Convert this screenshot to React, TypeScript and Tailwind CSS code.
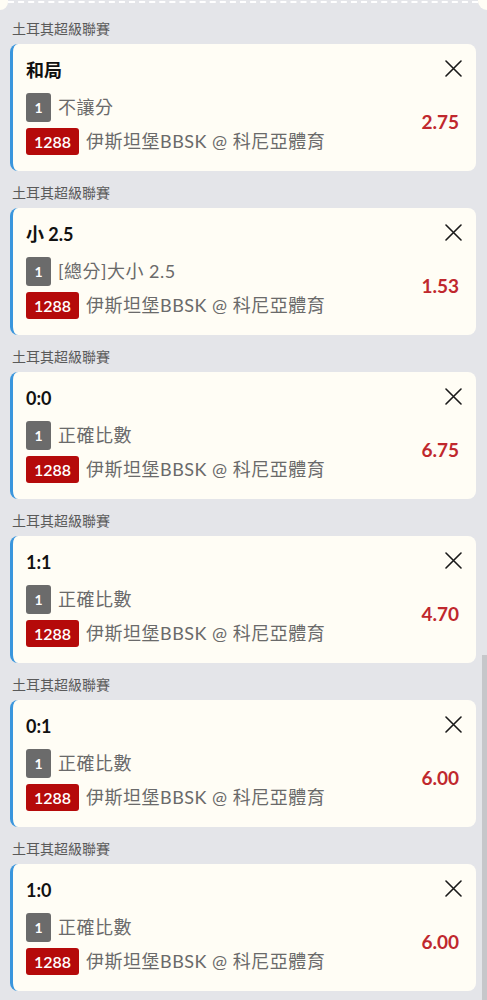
import type React from "react"

interface Bet {
  pick: string
  market: string
  odds: string
}

const bets: Bet[] = [
  { pick: "和局", market: "不讓分", odds: "2.75" },
  { pick: "小 2.5", market: "[總分]大小 2.5", odds: "1.53" },
  { pick: "0:0", market: "正確比數", odds: "6.75" },
  { pick: "1:1", market: "正確比數", odds: "4.70" },
  { pick: "0:1", market: "正確比數", odds: "6.00" },
  { pick: "1:0", market: "正確比數", odds: "6.00" },
]

const CloseIcon = () => (
  <svg width="17" height="17" viewBox="0 0 17 17" fill="none">
    <path d="M1 1L16 16M16 1L1 16" stroke="#1a1a1a" strokeWidth="1.6" strokeLinecap="round" />
  </svg>
)

const BetCard: React.FC<{ bet: Bet }> = ({ bet }) => (
  <div className="mb-[7px]">
    <div className="h-[28px] flex items-center pl-[2px] text-[14px] text-[#5a5a5a]">土耳其超級聯賽</div>
    <div className="mt-[2px] h-[127px] flex bg-[#fffdf5] rounded-lg border-l-[3px] border-[#3a96dd] pl-[13px] pr-[14px]">
      <div className="flex-1 pt-[14px]">
        <div className="h-[24px] leading-[24px] text-[18px] font-bold text-[#111]">{bet.pick}</div>
        <div className="mt-[11px] h-[29px] flex items-center gap-[7px]">
          <span className="w-[25px] h-[29px] rounded-[3px] bg-[#6b6b6b] text-white text-[14px] font-bold flex items-center justify-center">
            1
          </span>
          <span className="text-[18px] tracking-[0.5px] text-[#6a6a6a]">{bet.market}</span>
        </div>
        <div className="mt-[6px] h-[27px] flex items-center gap-[7px]">
          <span className="w-[53px] h-[27px] rounded-[3px] bg-[#b50a0a] text-white text-[16px] font-semibold flex items-center justify-center">
            1288
          </span>
          <span className="text-[18px] tracking-[0.5px] text-[#6a6a6a]">伊斯坦堡BBSK @ 科尼亞體育</span>
        </div>
      </div>
      <div className="flex flex-col items-end pt-[16px]">
        <CloseIcon />
        <div className="mt-[33px] mr-[3px] h-[24px] leading-[24px] text-[19px] font-bold text-[#c0282d]">{bet.odds}</div>
      </div>
    </div>
  </div>
)

export default function App() {
  return (
    <div
      className="relative w-full min-h-screen bg-[#e4e5e9] overflow-hidden"
      style={{ fontFamily: 'Lato, "Noto Sans CJK TC", sans-serif' }}
    >
      <div className="h-[14px] flex items-start">
        <div className="w-[8px] h-[10px] bg-[#fffdf5] rounded-br-full" />
        <div className="flex-1 mt-[1px] border-t-2 border-dashed border-white" />
        <div className="w-[9px] h-[10px] bg-[#fffdf5] rounded-bl-full" />
      </div>
      <div className="px-[10px] pr-[11px]">
        {bets.map((bet, i) => (
          <BetCard key={i} bet={bet} />
        ))}
      </div>
      <div className="absolute right-0 top-[655px] w-[5px] h-[345px] bg-[#c6c7ca]" />
    </div>
  )
}
